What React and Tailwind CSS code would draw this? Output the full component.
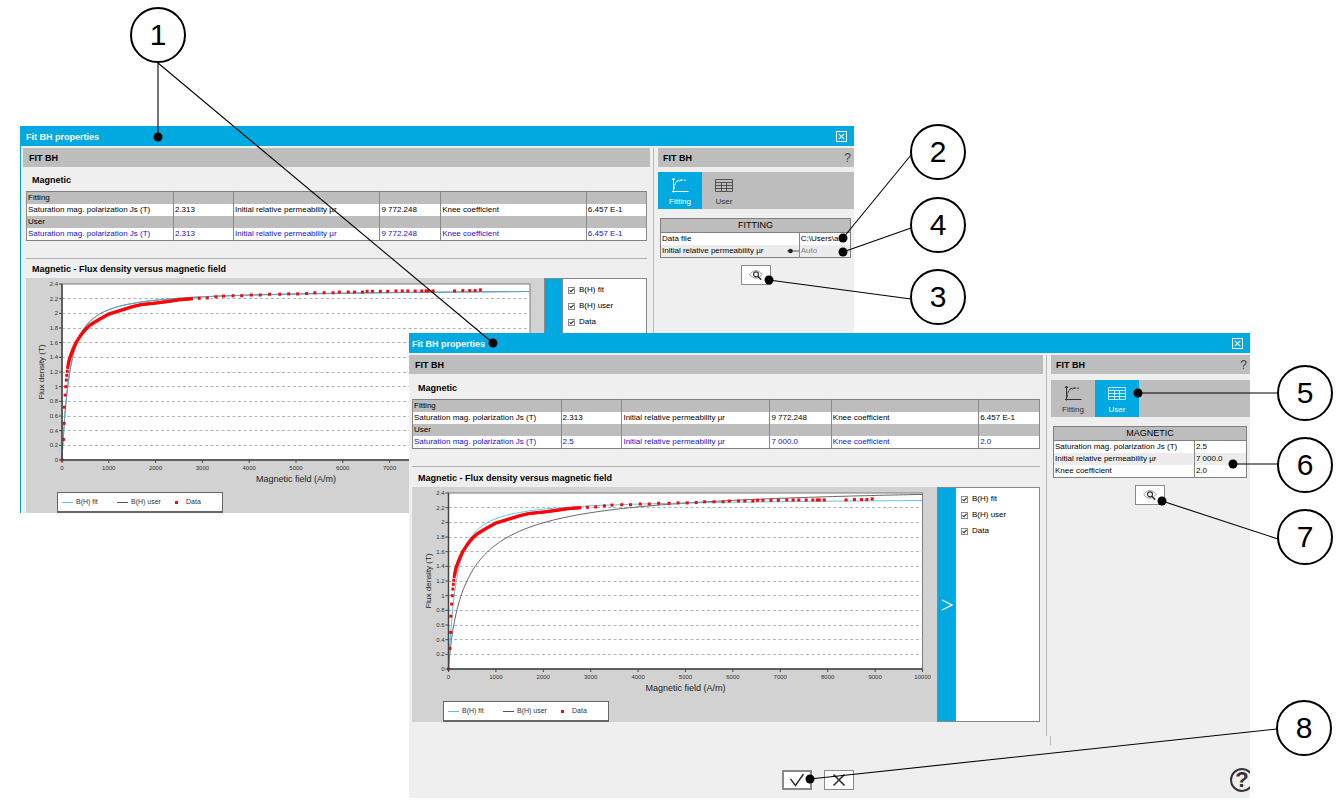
import { useId, useState } from "react";
import clsx from "clsx";

const MU0 = 4 * Math.PI * 1e-7;

// measured points, H in A/m and B in T
const steepPoints = [
  [0, 0], [30, 0.28], [45, 0.5], [50, 0.72], [68, 0.885], [80, 1.0],
  [93, 1.09], [102, 1.155], [112, 1.21], [122, 1.26],
];

const densePoints = [
  [130, 1.29], [160, 1.38], [200, 1.45], [250, 1.53], [300, 1.6], [400, 1.7],
  [500, 1.78], [600, 1.84], [700, 1.88], [800, 1.92], [1000, 1.99],
  [1250, 2.04], [1500, 2.09], [1700, 2.12], [2000, 2.14], [2300, 2.165],
  [2500, 2.185], [2800, 2.2],
];

const sparsePoints = [
  [2930, 2.205], [3105, 2.21], [3290, 2.225], [3450, 2.235], [3656, 2.24],
  [3840, 2.24], [4045, 2.25], [4236, 2.25], [4434, 2.26], [4653, 2.26],
  [4844, 2.265], [5035, 2.265], [5226, 2.27], [5403, 2.28], [5601, 2.28],
  [5792, 2.28], [5926, 2.29], [6117, 2.29], [6252, 2.29], [6421, 2.29],
  [6520, 2.3], [6634, 2.3], [6803, 2.3], [6959, 2.3], [7136, 2.305],
  [7270, 2.305], [7390, 2.305], [7546, 2.305], [7687, 2.305], [7780, 2.305],
  [7822, 2.305], [7928, 2.305], [8388, 2.305], [8564, 2.31], [8713, 2.31],
  [8826, 2.31], [8939, 2.32],
];

function fillBetween(points) {
  const result = [];
  for (let i = 0; i < points.length - 1; i++) {
    const [h0, b0] = points[i];
    const [h1, b1] = points[i + 1];
    const steps = Math.ceil(Math.max((h1 - h0) / 30, (b1 - b0) / 0.02));
    for (let k = 0; k < steps; k++) {
      const t = k / steps;
      result.push([h0 + (h1 - h0) * t, b0 + (b1 - b0) * t]);
    }
  }
  return result;
}

const dataPoints = [...steepPoints, ...fillBetween(densePoints), ...sparsePoints];

function fluxDensity(h, { js, mur, knee }) {
  const ha = (MU0 * h * (mur - 1)) / js;
  const root = Math.sqrt((ha + 1) ** 2 - 4 * ha * (1 - knee));
  return MU0 * h + (js * (ha + 1 - root)) / (2 * (1 - knee));
}

const fitModel = { js: 2.313, mur: 9772.248, knee: 0.6457 };
const userModel = { js: 2.5, mur: 7000, knee: 2 };

function Chart({ width, user, visible }) {
  const left = 36;
  const top = 6;
  const w = width - 50;
  const h = 176;
  const x = (v) => left + (v / 10000) * w;
  const y = (v) => top + h - (v / 2.4) * h;

  function curve(model) {
    const pts = [];
    for (let f = 0; f <= 10000; f += f < 1000 ? 20 : 100) {
      pts.push(`${x(f).toFixed(1)},${y(fluxDensity(f, model)).toFixed(1)}`);
    }
    return pts.join(" ");
  }

  const yTicks = Array.from({ length: 13 }, (_, i) => i / 5);
  const xTicks = Array.from({ length: 11 }, (_, i) => i * 1000);

  return (
    <svg viewBox={`0 0 ${width} 214`} className="block h-[214px] w-full">
      <rect x={left} y={top} width={w} height={h} fill="#fff" stroke="#7a7a7a" />
      {yTicks.map((t, i) => (
        <g key={t}>
          {i > 0 && i < 12 && (
            <line
              x1={left}
              x2={left + w}
              y1={Math.floor(y(t)) + 0.5}
              y2={Math.floor(y(t)) + 0.5}
              stroke="#b4b4b4"
              strokeDasharray="3 2.5"
            />
          )}
          <line x1={left - 3} x2={left} y1={y(t)} y2={y(t)} stroke="#444" />
          <text x={left - 4} y={y(t) + 2} textAnchor="end" className="fill-[#333] text-[6px]">
            {t}
          </text>
        </g>
      ))}
      {xTicks.map((t) => (
        <g key={t}>
          <line x1={x(t)} x2={x(t)} y1={top + h} y2={top + h + 3} stroke="#444" />
          <text x={x(t)} y={top + h + 10} textAnchor="middle" className="fill-[#333] text-[6px]">
            {t}
          </text>
        </g>
      ))}
      {visible.user && (
        <polyline points={curve(user)} fill="none" stroke="#555" strokeWidth="0.9" />
      )}
      {visible.fit && (
        <polyline points={curve(fitModel)} fill="none" stroke="#4bb6de" strokeOpacity="0.85" />
      )}
      {visible.data &&
        dataPoints.map(([f, b], i) => (
          <rect key={i} x={x(f) - 1.5} y={y(b) - 1.5} width="3" height="3" fill="#fa0508" />
        ))}
      <path d={`M${left} ${top}V${top + h}H${left + w}`} fill="none" stroke="#444" strokeWidth="1.5" />
      <text x={left + w / 2} y="204" textAnchor="middle" className="fill-[#222] text-[9px]">
        Magnetic field (A/m)
      </text>
      <text
        transform={`translate(18 ${top + h / 2}) rotate(-90)`}
        textAnchor="middle"
        className="fill-[#222] text-[8px]"
      >
        Flux density (T)
      </text>
    </svg>
  );
}

function ChartLegend() {
  return (
    <div className="ml-[31px] flex h-[21px] w-[166px] items-center border border-b-2 border-[#666] bg-white px-1 text-[7px] text-[#333]">
      <span className="mr-[3px] h-px w-[11px] bg-[#5cbfe3]" />
      <span className="w-[41px]">B(H) fit</span>
      <span className="mr-[3px] h-px w-[11px] bg-[#555]" />
      <span className="w-11">B(H) user</span>
      <span className="mr-2 h-[3px] w-[3px] bg-[#fa0508]" />
      <span>Data</span>
    </div>
  );
}

function CheckRow({ label, checked, onChange }) {
  return (
    <label className="flex h-4 items-center gap-1 text-[8px]">
      <span className="relative flex h-[7px] w-[7px]">
        <input
          type="checkbox"
          checked={checked}
          onChange={onChange}
          className="h-[7px] w-[7px] appearance-none border border-[#8a8a8a] bg-white"
        />
        {checked && (
          <svg viewBox="0 0 7 7" className="pointer-events-none absolute inset-0 h-[7px] w-[7px]">
            <path d="M1.6 3.3l1.4 1.5 2.6-3" fill="none" stroke="#222" strokeWidth="1.1" />
          </svg>
        )}
      </span>
      {label}
    </label>
  );
}

function ResultTable({ user }) {
  const rows = [
    { title: "Fitting", values: ["2.313", "9 772.248", "6.457 E-1"], color: "text-black" },
    { title: "User", values: user, color: "text-[#1414c8]" },
  ];
  const labels = [
    "Saturation mag. polarization Js (T)",
    "Initial relative permeability µr",
    "Knee coefficient",
  ];

  return (
    <table className="w-full table-fixed border-collapse border border-[#808080] bg-white text-[8px] leading-[12px]">
      <colgroup>
        <col className="w-[23.7%]" />
        <col className="w-[9.7%]" />
        <col className="w-[23.6%]" />
        <col className="w-[9.8%]" />
        <col className="w-[23.5%]" />
        <col className="w-[9.7%]" />
      </colgroup>
      {rows.map((row) => (
        <tbody key={row.title}>
          <tr className="h-3 bg-[#bdbdbd]">
            <th className="border-x border-[#8a8a8a] p-0 pl-px text-left font-normal">{row.title}</th>
            {[1, 2, 3, 4, 5].map((n) => (
              <td key={n} className="border-x border-[#8a8a8a] p-0" />
            ))}
          </tr>
          <tr className={clsx("h-3", row.color)}>
            {labels.map((label, i) => [
              <td key={label} className="border-x border-[#8a8a8a] p-0 pl-px whitespace-nowrap">
                {label}
              </td>,
              <td key={i} className="border-x border-[#8a8a8a] p-0 pl-px whitespace-nowrap">
                {row.values[i]}
              </td>,
            ])}
          </tr>
        </tbody>
      ))}
    </table>
  );
}

function FittingIcon() {
  return (
    <svg viewBox="0 0 18 17" className="h-[17px] w-[18px]" fill="none" stroke="currentColor">
      <path d="M2.5 1v14.5M1 14.5h16.5M1 3l1.5-2L4 3" />
      <path d="M3 12.500C3.500 7 5 3.500 9 3.200H15" strokeDasharray="3 1" />
      <path d="M5 5.500l3-3M8 4.500l3-2" strokeWidth="0.7" />
    </svg>
  );
}

function UserIcon() {
  return (
    <svg viewBox="0 0 18 17" className="h-[17px] w-[18px]" fill="none" stroke="currentColor" strokeOpacity="0.75">
      <path d="M.5 2.500h17v12H.5zM.5 5.500h17M.5 8.500h17M.5 11.500h17M6.500 5.500v9M11.500 5.500v9" />
    </svg>
  );
}

function PreviewButton() {
  return (
    <button
      aria-label="Preview"
      className="mx-auto mt-[7px] flex h-5 w-[30px] items-center justify-center border border-[#8a8a8a] bg-white"
    >
      <svg viewBox="0 0 14 12" className="h-3 w-3.5" fill="none" stroke="#333">
        <path d="M.8 5.500C3 2.500 5 1.500 7 1.500s4.200 1.200 6 4C11.500 7.500 10 8.700 8 9.200 5 9.500 2.500 8 .8 5.500z" stroke="#888" strokeWidth="0.8" />
        <circle cx="7" cy="5.300" r="2.500" strokeWidth="1.200" />
        <path d="M8.800 7.200l3.400 3.600" strokeWidth="1.600" />
      </svg>
    </button>
  );
}

function SideTable({ title, rows }) {
  const id = useId();

  return (
    <table className="w-full table-fixed border-collapse border border-[#808080] bg-white text-[8px] leading-[12px]">
      <colgroup>
        <col className="w-[73%]" />
        <col />
      </colgroup>
      <thead>
        <tr className="h-[14px] bg-[#bdbdbd]">
          <th colSpan={2} className="border border-[#808080] p-0 text-[9px] leading-[13px] font-normal">
            {title}
          </th>
        </tr>
      </thead>
      <tbody>
        {rows.map((row, i) => (
          <tr key={row.label} className="h-3 even:bg-[#ececec]">
            <td className="border-r border-[#8a8a8a] p-0 pl-px">
              <div className="flex items-center justify-between">
                <label htmlFor={id + i}>{row.label}</label>
                {row.auto && (
                  <svg viewBox="0 0 12 6" className="h-1.5 w-3">
                    <path d="M0 3h12" stroke="#555" />
                    <circle cx="3.500" cy="3" r="2.300" fill="#222" />
                  </svg>
                )}
              </div>
            </td>
            <td className="p-0 pl-px">
              <input
                id={id + i}
                type="text"
                defaultValue={row.value}
                disabled={row.auto}
                className="block h-3 w-full bg-transparent outline-none disabled:text-[#808080]"
              />
            </td>
          </tr>
        ))}
      </tbody>
    </table>
  );
}

function FitWindow({ tab, user, results, side, chartWidth, sectionClass, mainClass, sideClass, className, children }) {
  const [visible, setVisible] = useState({ fit: true, user: true, data: true });

  function toggle(key) {
    setVisible({ ...visible, [key]: !visible[key] });
  }

  const tabs = [
    { name: "Fitting", icon: <FittingIcon /> },
    { name: "User", icon: <UserIcon /> },
  ];

  return (
    <section className={clsx("absolute flex flex-col overflow-hidden bg-[#efefef]", className)}>
      <header className="flex h-5 items-center justify-between bg-[#00a9e0] pr-[7px] pl-[3px] text-white">
        <h1 className={clsx("pt-[3px] text-[9px] font-bold", tab === "Fitting" && "pl-0.5")}>
          Fit BH properties
        </h1>
        <button aria-label="Close" className="flex h-[11px] w-[11px] items-center justify-center border border-white">
          <svg viewBox="0 0 7 7" className="h-[7px] w-[7px]" stroke="#fff" strokeWidth="1.200">
            <path d="M.8.8l5.400 5.400M6.200.8L.8 6.200" />
          </svg>
        </button>
      </header>

      <div className="flex pt-0.5">
        <main className={clsx("min-w-0 flex-1", mainClass)}>
          <h2 className="flex h-[19px] items-center bg-[#bdbdbd] pt-0.5 pl-1.5 text-[9px] font-bold">FIT BH</h2>
          <div className={clsx("px-[3px]", sectionClass)}>
            <h3 className="flex h-6 items-center pt-[3px] pl-1.5 text-[9px] font-bold">Magnetic</h3>
            <ResultTable user={results} />
            <hr className="mt-[17px] border-[#b0b0b0]" />
          </div>
          <div className={clsx("px-[3px]", sectionClass)}>
            <h3 className="flex h-[19px] items-center pt-[3px] pl-1.5 text-[9px] font-bold">
              Magnetic - Flux density versus magnetic field
            </h3>
            <div className="flex">
              <div className="min-w-0 flex-1 bg-[#d2d2d2]">
                <Chart width={chartWidth} user={user} visible={visible} />
                <ChartLegend />
              </div>
              <div className="flex w-[103px] border border-[#888] bg-white">
                <button aria-label="Collapse" className="flex w-[18px] items-center justify-center border-r border-[#888] bg-[#00a9e0]">
                  <svg viewBox="0 0 12 12" className="h-3 w-3" fill="none" stroke="#fff" strokeWidth="1.300">
                    <path d="M1 1l10 5-10 5" />
                  </svg>
                </button>
                <div className="flex flex-col pt-[3px] pl-[5px]">
                  <CheckRow label="B(H) fit" checked={visible.fit} onChange={() => toggle("fit")} />
                  <CheckRow label="B(H) user" checked={visible.user} onChange={() => toggle("user")} />
                  <CheckRow label="Data" checked={visible.data} onChange={() => toggle("data")} />
                </div>
              </div>
            </div>
          </div>
        </main>

        <div className="mr-1 ml-[3px] w-px bg-[#b8b8b8]" />

        <aside className={sideClass}>
          <h2 className="flex h-[19px] items-center justify-between bg-[#bdbdbd] pr-[3px] pl-[5px] text-[9px] font-bold">
            <span className="pt-0.5">FIT BH</span>
            <button aria-label="Help" className="text-[12px] font-normal text-[#444]">?</button>
          </h2>
          <div className={clsx("mt-[5px]", sectionClass)}>
            <nav className="flex h-[37px] bg-[#bdbdbd]">
              {tabs.map((item) => (
                <button
                  key={item.name}
                  className={clsx(
                    "flex w-11 flex-col items-center gap-[3px] pt-[5px] text-[8px] leading-[10px]",
                    item.name === tab ? "bg-[#00a9e0] text-white" : "text-[#333]"
                  )}
                >
                  {item.icon}
                  {item.name}
                </button>
              ))}
            </nav>
            <div className="pt-[9px] pr-[3px] pl-[2px]">
              <SideTable {...side} />
              <PreviewButton />
            </div>
          </div>
        </aside>
      </div>
      {children}
    </section>
  );
}

function WindowFooter() {
  return (
    <footer className="flex flex-col">
      <div className="h-[9px] w-[200px] self-end border-l border-[#b8b8b8]" />
      <div className="flex h-[53px] items-center pt-[17px]">
        <div className="flex flex-1 justify-center gap-3">
          <button aria-label="OK" className="flex h-5 w-[30px] items-center justify-center border-2 border-[#8a8a8a] bg-white">
            <svg viewBox="0 0 16 14" className="h-3.5 w-4" fill="none" stroke="#333" strokeWidth="1.500">
              <path d="M1.500 6l5 6.500 8-11.500" />
            </svg>
          </button>
          <button aria-label="Cancel" className="flex h-5 w-[30px] items-center justify-center border border-[#8a8a8a] bg-white">
            <svg viewBox="0 0 14 14" className="h-3.5 w-3.5" fill="none" stroke="#333" strokeWidth="1.700">
              <path d="M1.500 1.500l11 11M12.500 1.500l-11 11" />
            </svg>
          </button>
        </div>
        <div className="w-6 pl-1">
          <button aria-label="Help" className="flex h-6 w-6 items-center justify-center rounded-full border-2 border-[#333] text-[22px] leading-none font-bold text-[#333]">
            ?
          </button>
        </div>
      </div>
    </footer>
  );
}

// from: where the leader leaves the circle, dots: its ends on the windows
const callouts = [
  { n: 1, place: "left-[130px] top-[7px]", from: [158, 63], dots: [[158, 137], [493, 343]] },
  { n: 2, place: "left-[910px] top-[124px]", from: [911, 155], dots: [[843, 238]] },
  { n: 4, place: "left-[910px] top-[197px]", from: [911, 228], dots: [[843, 252]] },
  { n: 3, place: "left-[910px] top-[269px]", from: [911, 299], dots: [[769, 280]] },
  { n: 5, place: "left-[1277px] top-[365px]", from: [1278, 393], dots: [[1138, 393]] },
  { n: 6, place: "left-[1277px] top-[437px]", from: [1278, 464], dots: [[1233, 464]] },
  { n: 7, place: "left-[1277px] top-[509px]", from: [1278, 539], dots: [[1162, 501]] },
  { n: 8, place: "left-[1276px] top-[700px]", from: [1277, 729], dots: [[810, 779]] },
];

function Callouts() {
  return (
    <>
      <svg className="pointer-events-none absolute inset-0 h-full w-full">
        {callouts.map(({ n, from, dots }) =>
          dots.map(([x, y]) => (
            <g key={`${n}-${x}`}>
              <line x1={from[0]} y1={from[1]} x2={x} y2={y} stroke="#000" strokeWidth="1.100" />
              <circle cx={x} cy={y} r="4.500" />
            </g>
          ))
        )}
      </svg>
      {callouts.map(({ n, place }) => (
        <div
          key={n}
          className={clsx(
            "absolute flex h-14 w-14 items-center justify-center rounded-full border-2 border-black bg-white text-[30px] leading-none",
            place
          )}
        >
          {n}
        </div>
      ))}
    </>
  );
}

export default function App() {
  return (
    <div className="relative min-h-screen w-full overflow-hidden bg-white font-['Liberation_Sans',Arial,sans-serif] text-black">
      <FitWindow
        tab="Fitting"
        user={fitModel}
        results={["2.313", "9 772.248", "6.457 E-1"]}
        side={{
          title: "FITTING",
          rows: [
            { label: "Data file", value: "C:\\Users\\a..." },
            { label: "Initial relative permeability µr", value: "Auto", auto: true },
          ],
        }}
        chartWidth={518}
        mainClass="pl-0.5"
        sideClass="w-[196px]"
        className="top-[126px] left-5 w-[834px] border-l border-[#00a9e0]"
      />
      <FitWindow
        tab="User"
        user={userModel}
        results={["2.5", "7 000.0", "2.0"]}
        side={{
          title: "MAGNETIC",
          rows: [
            { label: "Saturation mag. polarization Js (T)", value: "2.5" },
            { label: "Initial relative permeability µr", value: "7 000.0" },
            { label: "Knee coefficient", value: "2.0" },
          ],
        }}
        chartWidth={524}
        sectionClass="pt-px"
        mainClass="pb-3.5"
        sideClass="w-[199px]"
        className="top-[333px] left-[409px] w-[841px]"
      >
        <WindowFooter />
      </FitWindow>
      <Callouts />
    </div>
  );
}
